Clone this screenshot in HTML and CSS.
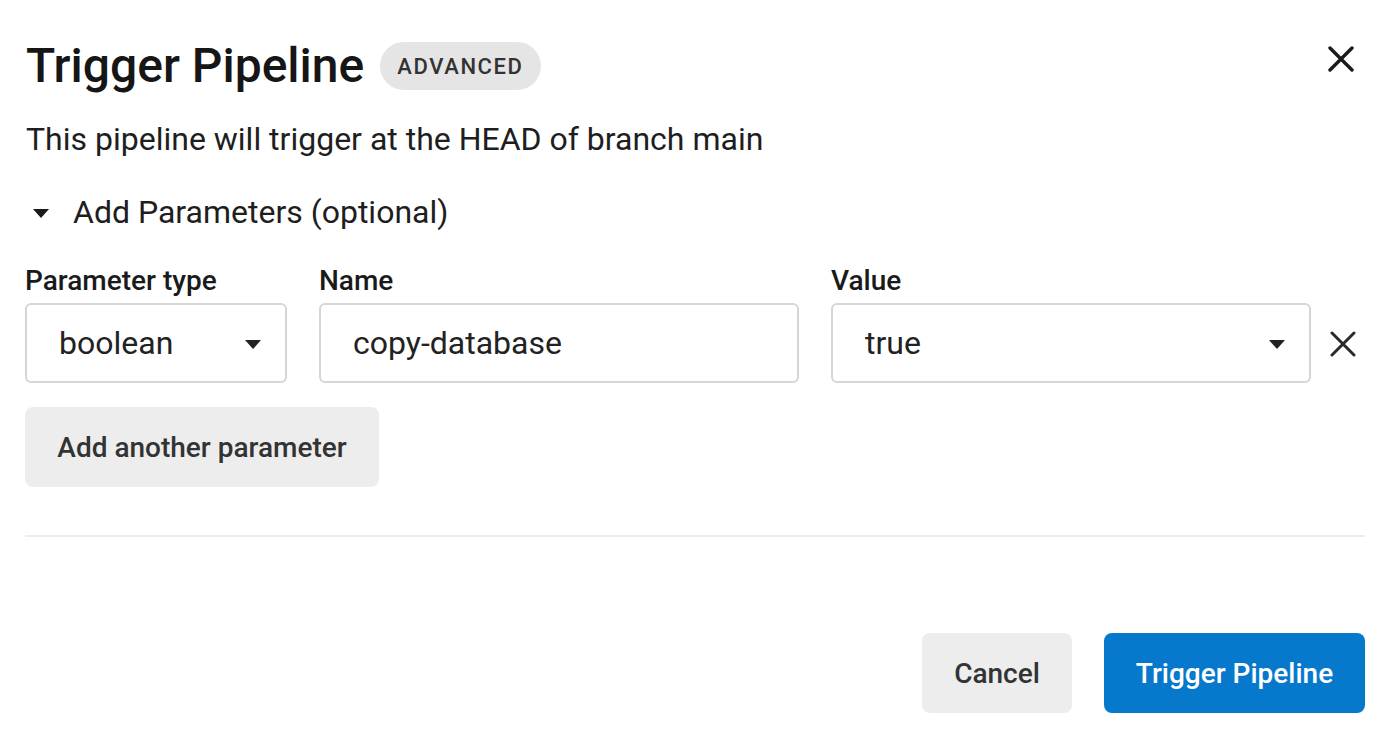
FILE: index.html
```html
<!DOCTYPE html>
<html>
<head>
<meta charset="utf-8">
<link rel="stylesheet" href="styles.css">
</head>
<body>
<div class="dialog">
  <div class="header">
    <div class="title-wrap">
      <h1 class="title">Trigger Pipeline</h1>
      <span class="badge">ADVANCED</span>
    </div>
    <button class="close" aria-label="Close">
      <svg width="26" height="26" viewBox="0 0 26 26"><path d="M2 2 L24 24 M24 2 L2 24" stroke="#1a1a1a" stroke-width="3.4" stroke-linecap="round"/></svg>
    </button>
  </div>
  <p class="subtitle">This pipeline will trigger at the HEAD of branch main</p>
  <div class="toggle"><span class="caret"></span><span>Add Parameters (optional)</span></div>
  <div class="params">
    <div class="field f-type">
      <label class="label">Parameter type</label>
      <div class="input select"><span>boolean</span><span class="arrow"></span></div>
    </div>
    <div class="field f-name">
      <label class="label">Name</label>
      <div class="input"><span>copy-database</span></div>
    </div>
    <div class="field f-value">
      <label class="label">Value</label>
      <div class="input select"><span>true</span><span class="arrow"></span></div>
    </div>
    <button class="remove" aria-label="Remove">
      <svg width="26" height="26" viewBox="0 0 26 26"><path d="M2 2 L24 24 M24 2 L2 24" stroke="#2a2a2a" stroke-width="3" stroke-linecap="round"/></svg>
    </button>
  </div>
  <button class="btn btn-gray add">Add another parameter</button>
  <hr class="divider">
  <div class="footer">
    <button class="btn btn-gray">Cancel</button>
    <button class="btn btn-blue">Trigger Pipeline</button>
  </div>
</div>
</body>
</html>
```

FILE: styles.css
```css
* { box-sizing: border-box; }
html, body { margin: 0; padding: 0; background: #fff; }
body { font-family: Roboto, "Noto Sans", sans-serif; color: #1a1a1a; }

.dialog {
  width: 1400px;
  height: 737px;
  padding: 38px 35px 0 25px;
  display: flex;
  flex-direction: column;
}

.header {
  display: flex;
  align-items: center;
  justify-content: space-between;
  height: 56px;
}
.title-wrap { display: flex; align-items: center; }
.title {
  margin: 0;
  font-size: 48px;
  line-height: 56px;
  font-weight: 500;
  color: #161616;
  padding-left: 1px;
}
.badge {
  margin-left: 16px;
  height: 48px;
  padding: 0 17px;
  border-radius: 24px;
  background: #e5e5e5;
  color: #333;
  font-size: 22px;
  font-weight: 500;
  letter-spacing: 1.6px;
  display: flex;
  align-items: center;
}
.close {
  border: 0; background: none; padding: 0;
  width: 26px; height: 26px;
  margin-right: 11px;
  align-self: flex-start;
  margin-top: 8px;
  display: flex;
}

.subtitle {
  margin: 25px 0 0 0;
  font-size: 32px;
  line-height: 40px;
  color: #1e1e1e;
  padding-left: 1px;
}

.toggle {
  margin-top: 33px;
  display: flex;
  align-items: center;
  font-size: 32px;
  line-height: 40px;
  color: #1e1e1e;
}
.caret {
  width: 0; height: 0;
  margin-left: 8px;
  margin-right: 24px;
  border-left: 8px solid transparent;
  border-right: 8px solid transparent;
  border-top: 9px solid #1a1a1a;
  margin-top: 2px;
}

.params {
  margin-top: 33px;
  display: flex;
  align-items: flex-end;
  gap: 32px;
}
.field { display: flex; flex-direction: column; }
.f-type { width: 262px; }
.f-name { width: 480px; }
.f-value { width: 480px; }
.label {
  font-size: 28px;
  line-height: 32px;
  font-weight: 500;
  color: #1a1a1a;
  margin-bottom: 6px;
}
.input {
  height: 80px;
  border: 2px solid #d6d6d6;
  border-radius: 6px;
  display: flex;
  align-items: center;
  justify-content: space-between;
  padding: 0 24px 0 32px;
  font-size: 32px;
  color: #222;
}
.arrow {
  width: 0; height: 0;
  border-left: 8.5px solid transparent;
  border-right: 8.5px solid transparent;
  border-top: 9px solid #222;
  margin-top: 2px;
}
.remove {
  border: 0; background: none; padding: 0;
  width: 26px; height: 26px;
  margin-left: -13px;
  margin-bottom: 26px;
  display: flex;
}

.btn {
  border: 0;
  height: 80px;
  border-radius: 8px;
  font-family: Roboto, "Noto Sans", sans-serif;
  font-size: 28px;
  font-weight: 500;
  padding: 0 32px;
  cursor: pointer;
}
.btn-gray { background: #ededed; color: #333; }
.btn-blue { background: #0779cc; color: #fff; }
.add {
  margin-top: 24px;
  width: 354px;
  align-self: flex-start;
}

.divider {
  margin: 48px 0 0 0;
  border: 0;
  height: 2px;
  background: #ececec;
}

.footer {
  margin-top: 96px;
  display: flex;
  justify-content: flex-end;
  gap: 32px;
}
.footer .btn-gray { width: 150px; padding: 0; }
.footer .btn-blue { width: 261px; padding: 0; }
```
